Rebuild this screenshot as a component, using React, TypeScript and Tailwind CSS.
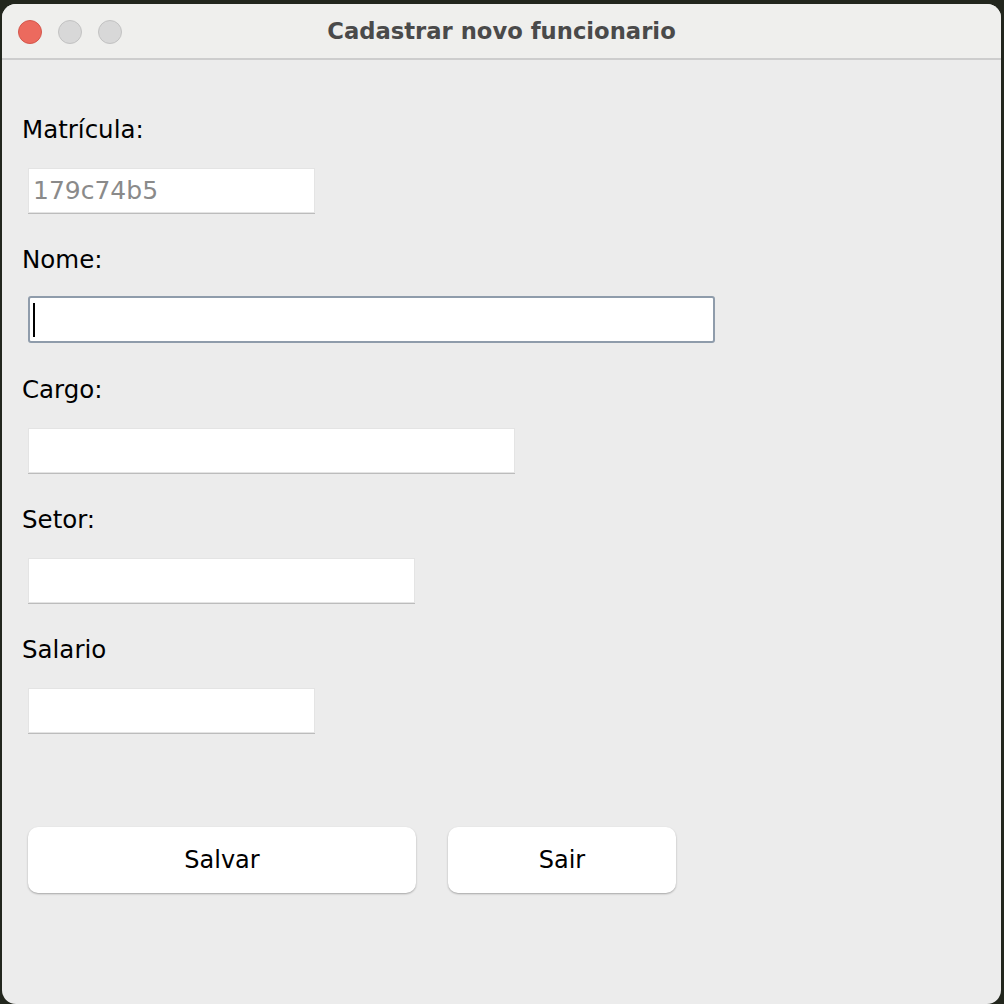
import React from "react";

type Field = {
  label: string;
  width: string;
  value?: string;
  focused?: boolean;
};

const fields: Field[] = [
  { label: "Matrícula:", width: "w-[287px]", value: "179c74b5" },
  { label: "Nome:", width: "w-[687px]", focused: true },
  { label: "Cargo:", width: "w-[487px]" },
  { label: "Setor:", width: "w-[387px]" },
  { label: "Salario", width: "w-[287px]" },
];

function TrafficLights() {
  return (
    <div className="absolute left-[16px] top-[16px] flex gap-[16px]">
      <span className="block h-[24px] w-[24px] rounded-full border border-[#d4574c] bg-[#ec6a5e]" />
      <span className="block h-[24px] w-[24px] rounded-full border border-[#c2c2c2] bg-[#d8d8d8]" />
      <span className="block h-[24px] w-[24px] rounded-full border border-[#c2c2c2] bg-[#d8d8d8]" />
    </div>
  );
}

function FormField({ field }: { field: Field }) {
  return (
    <div className="flex flex-col">
      <label className="h-[30px] text-[24.5px] leading-[30px] text-black">{field.label}</label>
      {field.focused ? (
        <div
          className={`ml-[6px] mt-[21px] flex h-[47px] ${field.width} items-center rounded-[3px] border-2 border-[#8f9cab] bg-white pl-[3px]`}
        >
          {/* caret */}
          <span className="block h-[34px] w-[2px] bg-black" />
        </div>
      ) : (
        <div
          className={`ml-[6px] mt-[23px] flex h-[45px] ${field.width} items-center border border-[#e4e4e4] bg-white pl-[4px] shadow-[0_1px_0_#bcbcbc]`}
        >
          {field.value && (
            <span className="text-[25px] leading-none text-[#8a8a8a]">{field.value}</span>
          )}
        </div>
      )}
    </div>
  );
}

export default function App(): JSX.Element {
  return (
    <div
      className="h-[1004px] w-[1004px] overflow-hidden bg-[#22261d] pl-[2px] pt-[4px]"
      style={{ fontFamily: '"DejaVu Sans", "Liberation Sans", sans-serif' }}
    >
      <div className="flex h-[1000px] w-[999px] flex-col overflow-hidden rounded-[14px] bg-[#ececec]">
        {/* title bar */}
        <div className="relative flex h-[56px] shrink-0 items-center justify-center border-b-2 border-[#cdcdcd] bg-[#efefed]">
          <TrafficLights />
          <span className="text-[22.7px] font-bold text-[#4a4a4a]">Cadastrar novo funcionario</span>
        </div>

        {/* form */}
        <div className="flex flex-col gap-[32px] pl-[20px] pt-[55px]">
          {fields.map((f) => (
            <FormField key={f.label} field={f} />
          ))}
        </div>

        <div className="mt-[94px] flex gap-[32px] pl-[26px]">
          <button className="h-[66px] w-[388px] rounded-[10px] bg-white text-[24px] text-black shadow-[0_1px_2px_rgba(0,0,0,0.3)]">
            Salvar
          </button>
          <button className="h-[66px] w-[228px] rounded-[10px] bg-white text-[24px] text-black shadow-[0_1px_2px_rgba(0,0,0,0.3)]">
            Sair
          </button>
        </div>
      </div>
    </div>
  );
}
